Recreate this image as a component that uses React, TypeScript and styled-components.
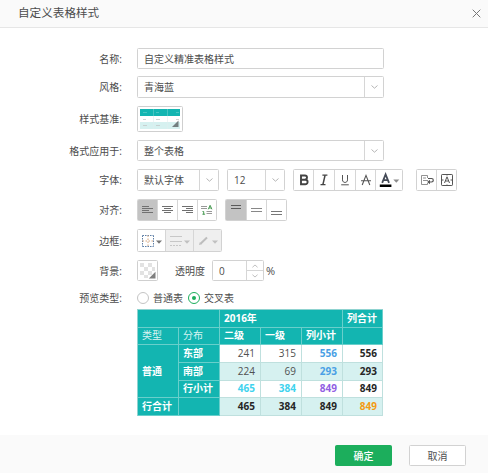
import React from "react";
import styled, { createGlobalStyle, css } from "styled-components";

const GlobalStyle = createGlobalStyle`
  * { box-sizing: border-box; }
  body { margin: 0; background: #fff; }
`;

const Dialog = styled.div`
  width: 488px;
  height: 473px;
  display: flex;
  flex-direction: column;
  overflow: hidden;
  background: #fff;
  color: #4c4c4c;
  font: 10px/14px "Open Sans", "Noto Sans CJK SC", sans-serif;
  white-space: nowrap;
`;

const Header = styled.header`
  height: 28px;
  flex: none;
  display: flex;
  align-items: center;
  justify-content: space-between;
  padding: 0 7px 1px 18px;
  background: #fafafa;
  border-bottom: 1px solid #e6e6e6;
`;

const Title = styled.h1`
  margin: 0;
  font-size: 11.6px;
  font-weight: 400;
  line-height: 16px;
`;

const Form = styled.main`
  flex: 1;
  padding-top: 20px;
`;

const Row = styled.div<{ $h: number; $gap: number }>`
  display: flex;
  align-items: center;
  height: ${(p) => p.$h}px;
  margin-bottom: ${(p) => p.$gap}px;
`;

const Label = styled.label`
  width: 122px;
  margin-right: 15px;
  flex: none;
  text-align: right;
`;

const Field = styled.div<{ $w: number; $ml?: number }>`
  width: ${(p) => p.$w}px;
  height: 100%;
  margin-left: ${(p) => p.$ml ?? 0}px;
  flex: none;
  display: flex;
  align-items: center;
  border: 1px solid #d2d2d2;
  border-radius: 1.5px;
  background: #fff;
`;

const Value = styled.span`
  flex: 1;
  padding-left: 6px;
`;

const Trigger = styled.span`
  width: 19px;
  height: 100%;
  display: flex;
  align-items: center;
  justify-content: center;
  border-left: 1px solid #d6d6d6;
`;

const Group = styled.div<{ $ml?: number }>`
  display: flex;
  height: 100%;
  flex: none;
  margin-left: ${(p) => p.$ml ?? 0}px;
  border: 1px solid #d2d2d2;
  border-radius: 1.5px;
  overflow: hidden;
`;

const Tool = styled.button<{ $w?: number; $on?: boolean; $off?: boolean }>`
  width: ${(p) => p.$w ?? 20}px;
  height: 100%;
  padding: 0;
  border: 0;
  display: flex;
  align-items: center;
  justify-content: center;
  color: #505050;
  background: ${(p) => (p.$on ? "#c3c3c3" : p.$off ? "#efefef" : "#fff")};
  & + & { border-left: 1px solid #d6d6d6; }
  svg { flex: none; }
`;

const Swatch = styled.div<{ $w: number }>`
  width: ${(p) => p.$w}px;
  height: 100%;
  padding: 1px;
  border: 1px solid #cfcfcf;
  border-radius: 1.5px;
  svg { display: block; }
`;

const Inline = styled.span<{ $ml: number }>`
  margin-left: ${(p) => p.$ml}px;
`;

const Unit = styled.span`
  margin-left: 2px;
  font-size: 11px;
`;

const Stepper = styled.span`
  width: 17px;
  height: 100%;
  display: flex;
  flex-direction: column;
  border-left: 1px solid #d6d6d6;
`;

const Step = styled.span`
  flex: 1;
  display: flex;
  align-items: center;
  justify-content: center;
  & + & { border-top: 1px solid #d6d6d6; }
`;

const Radio = styled.span<{ $on?: boolean; $ml?: number }>`
  width: 12px;
  height: 12px;
  margin-left: ${(p) => p.$ml ?? 0}px;
  display: flex;
  align-items: center;
  justify-content: center;
  border-radius: 50%;
  border: 1px solid ${(p) => (p.$on ? "#1cae5c" : "#c4c4c4")};
  &::after {
    content: "";
    width: 4px;
    height: 4px;
    border-radius: 50%;
    background: ${(p) => (p.$on ? "#1cae5c" : "transparent")};
  }
`;

const Preview = styled.table`
  width: 246px;
  height: 107px;
  margin-left: 137px;
  table-layout: fixed;
  border-collapse: separate;
  border-spacing: 0;
  border-top: 1px solid #8fd3d0;
  border-left: 1px solid #8fd3d0;
`;

type CellProps = { $head?: boolean; $even?: boolean; $bold?: boolean; $color?: string };
const Cell = styled.td<CellProps>`
  height: 17.67px;
  padding: 0 5px 1px 0;
  overflow: hidden;
  line-height: 14px;
  text-align: right;
  font-weight: ${(p) => (p.$bold ? 700 : 400)};
  color: ${(p) => p.$color ?? (p.$bold ? "#262626" : "#505050")};
  background: ${(p) => (p.$even ? "#d6f1f0" : "#fff")};
  border-right: 1px solid #bfe0de;
  border-bottom: 1px solid #bfe0de;
  ${(p) =>
    p.$head &&
    css`
      padding: 0 0 1px 4px;
      text-align: left;
      color: ${p.$bold ? "#fff" : "#d8f4f2"};
      background: #13b5b1;
      border-color: #69cfcb;
    `}
`;

const Footer = styled.footer`
  height: 38px;
  flex: none;
  display: flex;
  gap: 17px;
  padding: 10px 0 0 335px;
  background: #fafafa;
`;

const Button = styled.button<{ $primary?: boolean }>`
  width: 57px;
  height: 21px;
  padding: 0;
  border-radius: 1.5px;
  border: 1px solid ${(p) => (p.$primary ? "#1cae5c" : "#d2d2d2")};
  background: ${(p) => (p.$primary ? "#1cae5c" : "#fff")};
  color: ${(p) => (p.$primary ? "#fff" : "#505050")};
  font: ${(p) => (p.$primary ? 500 : 400)} 10px/14px "Open Sans", "Noto Sans CJK SC", sans-serif;
`;

const Chevron = ({ up = false, w = 7 }: { up?: boolean; w?: number }) => (
  <svg width={w} height="4" viewBox="0 0 7 4" fill="none" stroke="#b5b5b5">
    <path d={up ? "M.5 3.5 3.5.8l3 2.7" : "M.5.5l3 2.7 3-2.7"} />
  </svg>
);

const Lines = ({ rows, color = "#707070" }: { rows: [number, number, number][]; color?: string }) => (
  <svg width="13" height="14" viewBox="0 0 13 14" stroke={color}>
    {rows.map(([x, y, w]) => (
      <path key={y} d={`M${x} ${y}h${w}`} />
    ))}
  </svg>
);

const Select = ({ w, ml, children }: { w: number; ml?: number; children: React.ReactNode }) => (
  <Field $w={w} $ml={ml}>
    <Value>{children}</Value>
    <Trigger>
      <Chevron />
    </Trigger>
  </Field>
);

const BLUE = "#4a9fe5";
const CYAN = "#3fd3ee";

const dataRows: { even: boolean; bold?: boolean; name: string; cells: [string, string?][] }[] = [
  { even: false, name: "东部", cells: [["241"], ["315"], ["556", BLUE], ["556"]] },
  { even: true, name: "南部", cells: [["224"], ["69"], ["293", BLUE], ["293"]] },
  { even: false, bold: true, name: "行小计", cells: [["465", CYAN], ["384", CYAN], ["849", "#925fe3"], ["849"]] },
];

export default function App() {
  return (
    <>
      <GlobalStyle />
      <Dialog>
        <Header>
          <Title>自定义表格样式</Title>
          <svg width="9" height="9" viewBox="0 0 9 9" stroke="#777" fill="none">
            <path d="M.7.7l7.6 7.6M8.3.7L.7 8.3" />
          </svg>
        </Header>
        <Form>
          <Row $h={21} $gap={7}>
            <Label>名称:</Label>
            <Field $w={247}>
              <Value>自定义精准表格样式</Value>
            </Field>
          </Row>
          <Row $h={22} $gap={8}>
            <Label>风格:</Label>
            <Select w={247}>青海蓝</Select>
          </Row>
          <Row $h={26} $gap={8}>
            <Label>样式基准:</Label>
            <Swatch $w={46}>
              <svg width="42" height="22" viewBox="0 0 42 22">
                <path fill="#13b5b1" d="M1 1h40v7H1z" />
                <path fill="#d6f1f0" d="M1 14h40v7H1z" />
                <path stroke="#6ccfcc" strokeWidth=".6" d="M14.5 1v7M28.5 1v7" />
                <path stroke="#e0efee" strokeWidth=".6" d="M14.5 8v13M28.5 8v13" />
                <path stroke="#6fd0cd" d="M4 4.5h4M17 4.5h3M37 4.5h3" strokeWidth=".6" />
                <path stroke="#c4c9c9" d="M4 11.5h3M17 11.5h4M37 11.5h3M4 17.5h4M17 17.5h4" strokeWidth=".8" />
                <path fill="#737f80" d="M39.5 12.5V19H33z" />
              </svg>
            </Swatch>
          </Row>
          <Row $h={21} $gap={8}>
            <Label>格式应用于:</Label>
            <Select w={247}>整个表格</Select>
          </Row>
          <Row $h={22} $gap={8}>
            <Label>字体:</Label>
            <Select w={82}>默认字体</Select>
            <Select w={58} ml={8}>12</Select>
            <Group $ml={8}>
              <Tool $w={19}>
                <svg width="14" height="14" viewBox="0 0 14 14" fill="none" stroke="#444" strokeWidth="1.9">
                  <path d="M4 2.5h3.9a2.1 2.1 0 010 4.2H4zM4 6.7h4.3a2.3 2.3 0 010 4.6H4z" />
                </svg>
              </Tool>
              <Tool $w={21}>
                <svg width="14" height="14" viewBox="0 0 14 14" fill="none" stroke="#444" strokeWidth="1.2">
                  <path d="M5.4 2.1h5M3.5 11.7h5" />
                  <path d="M8.1 2.1L5.9 11.7" strokeWidth="1.5" />
                </svg>
              </Tool>
              <Tool $w={21}>
                <svg width="14" height="14" viewBox="0 0 14 14" fill="none" stroke="#555">
                  <path d="M4.5 2v4.9c0 3.4 5 3.4 5 0V2M3.2 11.8h7.6" />
                </svg>
              </Tool>
              <Tool $w={20}>
                <svg width="14" height="14" viewBox="0 0 14 14" fill="none" stroke="#555">
                  <path d="M3.2 12L7 2.4 10.8 12M2 7.8h10" strokeWidth="1.1" />
                </svg>
              </Tool>
              <Tool $w={27}>
                <svg width="24" height="18" viewBox="0 0 24 18">
                  <path fill="none" stroke="#454b57" strokeWidth="1.8" d="M5.2 11.8L8.6 3.4 12 11.8M6.3 9.2h4.6" />
                  <path fill="#000" d="M2.8 13.5h11.6v2.5H2.8z" />
                  <path fill="#8c8c8c" d="M16.3 8.5h6l-3 3.2z" />
                </svg>
              </Tool>
            </Group>
            <Group $ml={13}>
              <Tool $w={19}>
                <svg width="16" height="14" viewBox="0 0 16 14" fill="none" stroke="#777">
                  <path d="M8.5 5V2.5h-6v9h6V10M4 5h3M4 7.5h5" strokeWidth=".8" />
                  <path d="M9 5.5h3.5q1.8 0 1.8 1.7T12.5 9H10" stroke="#555" strokeWidth="1.2" />
                  <path fill="#555" stroke="none" d="M11 6.8v4.4L8.1 9z" />
                </svg>
              </Tool>
              <Tool $w={20}>
                <svg width="14" height="14" viewBox="0 0 14 14" fill="none" stroke="#555">
                  <rect x="1.5" y="1.5" width="11" height="11" rx=".7" />
                  <path d="M4.5 10L7 3.8 9.5 10M5.4 8h3.2M1.5 7h2M10.5 7h2M7 1.5v1M7 11.5v1" />
                </svg>
              </Tool>
            </Group>
          </Row>
          <Row $h={22} $gap={8}>
            <Label>对齐:</Label>
            <Group>
              <Tool $w={19} $on>
                <Lines rows={[[1, 3.5, 7], [1, 5.5, 11], [1, 7.5, 7], [1, 9.5, 11]]} />
              </Tool>
              <Tool $w={20}>
                <Lines rows={[[1, 3.5, 11], [3, 5.5, 7], [1, 7.5, 11], [3, 9.5, 7]]} />
              </Tool>
              <Tool $w={20}>
                <Lines rows={[[1, 3.5, 11], [5, 5.5, 7], [1, 7.5, 11], [5, 9.5, 7]]} />
              </Tool>
              <Tool $w={19}>
                <svg width="14" height="14" viewBox="0 0 14 14" fill="none" stroke="#999">
                  <path d="M1 3.5h6M1 5.5h6M6.5 8.5H12M6.5 10.5H12" />
                  <path stroke="#499b53" d="M8.3 6.3l1.8-4 1.8 4M8.9 5h2.4M2.5 8.5h1.2v3M2.4 11.2h2.7" />
                </svg>
              </Tool>
            </Group>
            <Group $ml={8}>
              <Tool $w={20} $on>
                <Lines rows={[[1, 2.5, 10], [1, 5.5, 10]]} color="#5a5a5a" />
              </Tool>
              <Tool $w={20}>
                <Lines rows={[[1, 5.5, 11], [1, 8.5, 11]]} color="#888" />
              </Tool>
              <Tool $w={20}>
                <Lines rows={[[1, 8.5, 11], [1, 11.5, 11]]} color="#777" />
              </Tool>
            </Group>
          </Row>
          <Row $h={23} $gap={8}>
            <Label>边框:</Label>
            <Group>
              <Tool $w={27}>
                <svg width="23" height="15" viewBox="0 0 23 15" fill="none">
                  <path stroke="#5e7fa6" strokeDasharray="1.5 1" d="M2.5 2.5v11M2.5 2.5h11M2.5 13.5h11M13.5 2.5v11" />
                  <path stroke="#d6a77f" strokeDasharray="1.5 1.5" d="M8 2.5v11M2.5 8h11" />
                  <path fill="#777" d="M16 7.5h6l-3 3.3z" />
                </svg>
              </Tool>
              <Tool $w={28} $off>
                <svg width="22" height="15" viewBox="0 0 22 15" fill="none">
                  <path stroke="#c7c7c7" d="M1 3.5h12M1 8.5h12" />
                  <path stroke="#c7c7c7" strokeDasharray="2 1" d="M1 12.5h12" />
                  <path fill="#c0c0c0" d="M15 7.5h6l-3 3.3z" />
                </svg>
              </Tool>
              <Tool $w={28} $off>
                <svg width="22" height="15" viewBox="0 0 22 15" fill="none">
                  <path stroke="#bdbdbd" strokeWidth="2" d="M3.5 10.7L10 4.6" />
                  <path fill="#bdbdbd" d="M2 12l.8-2.7 1.8 1.9z" />
                  <path fill="#c0c0c0" d="M15 7.5h6l-3 3.3z" />
                </svg>
              </Tool>
            </Group>
          </Row>
          <Row $h={21} $gap={11}>
            <Label>背景:</Label>
            <Swatch $w={21}>
              <svg width="17" height="17" viewBox="0 0 17 17">
                <path fill="#e2e2e2" d="M1 1h4v4H1zM9 1h4v4H9zM5 5h4v4H5zM13 5h3v4h-3zM1 9h4v4H1zM9 9h4v4H9zM5 13h4v3H5zM13 13h3v3h-3z" />
                <path fill="#808080" d="M16.5 9.8v6.7H9.8z" />
              </svg>
            </Swatch>
            <Inline $ml={17}>透明度</Inline>
            <Field $w={52} $ml={7}>
              <Value>0</Value>
              <Stepper>
                <Step><Chevron up w={6} /></Step>
                <Step><Chevron w={6} /></Step>
              </Stepper>
            </Field>
            <Unit>%</Unit>
          </Row>
          <Row $h={12} $gap={5}>
            <Label>预览类型:</Label>
            <Radio />
            <Inline $ml={4}>普通表</Inline>
            <Radio $on $ml={5} />
            <Inline $ml={4}>交叉表</Inline>
          </Row>
          <Preview>
            <colgroup>
              {[41, 41, 41, 41, 41, 40].map((w, i) => (
                <col key={i} width={w} />
              ))}
            </colgroup>
            <tbody>
              <tr>
                <Cell $head colSpan={2} />
                <Cell $head $bold colSpan={3}>2016年</Cell>
                <Cell $head $bold>列合计</Cell>
              </tr>
              <tr>
                <Cell $head>类型</Cell>
                <Cell $head>分布</Cell>
                <Cell $head $bold>二级</Cell>
                <Cell $head $bold>一级</Cell>
                <Cell $head $bold>列小计</Cell>
                <Cell $head />
              </tr>
              {dataRows.map((r, i) => (
                <tr key={r.name}>
                  {i === 0 && <Cell $head $bold rowSpan={3}>普通</Cell>}
                  <Cell $head $bold>{r.name}</Cell>
                  {r.cells.map(([v, color], c) => (
                    <Cell key={c} $even={r.even} $bold={r.bold || c > 1} $color={color}>{v}</Cell>
                  ))}
                </tr>
              ))}
              <tr>
                <Cell $head $bold>行合计</Cell>
                <Cell $head />
                <Cell $even $bold>465</Cell>
                <Cell $even $bold>384</Cell>
                <Cell $even $bold>849</Cell>
                <Cell $even $bold $color="#f39a13">849</Cell>
              </tr>
            </tbody>
          </Preview>
        </Form>
        <Footer>
          <Button $primary>确定</Button>
          <Button>取消</Button>
        </Footer>
      </Dialog>
    </>
  );
}
